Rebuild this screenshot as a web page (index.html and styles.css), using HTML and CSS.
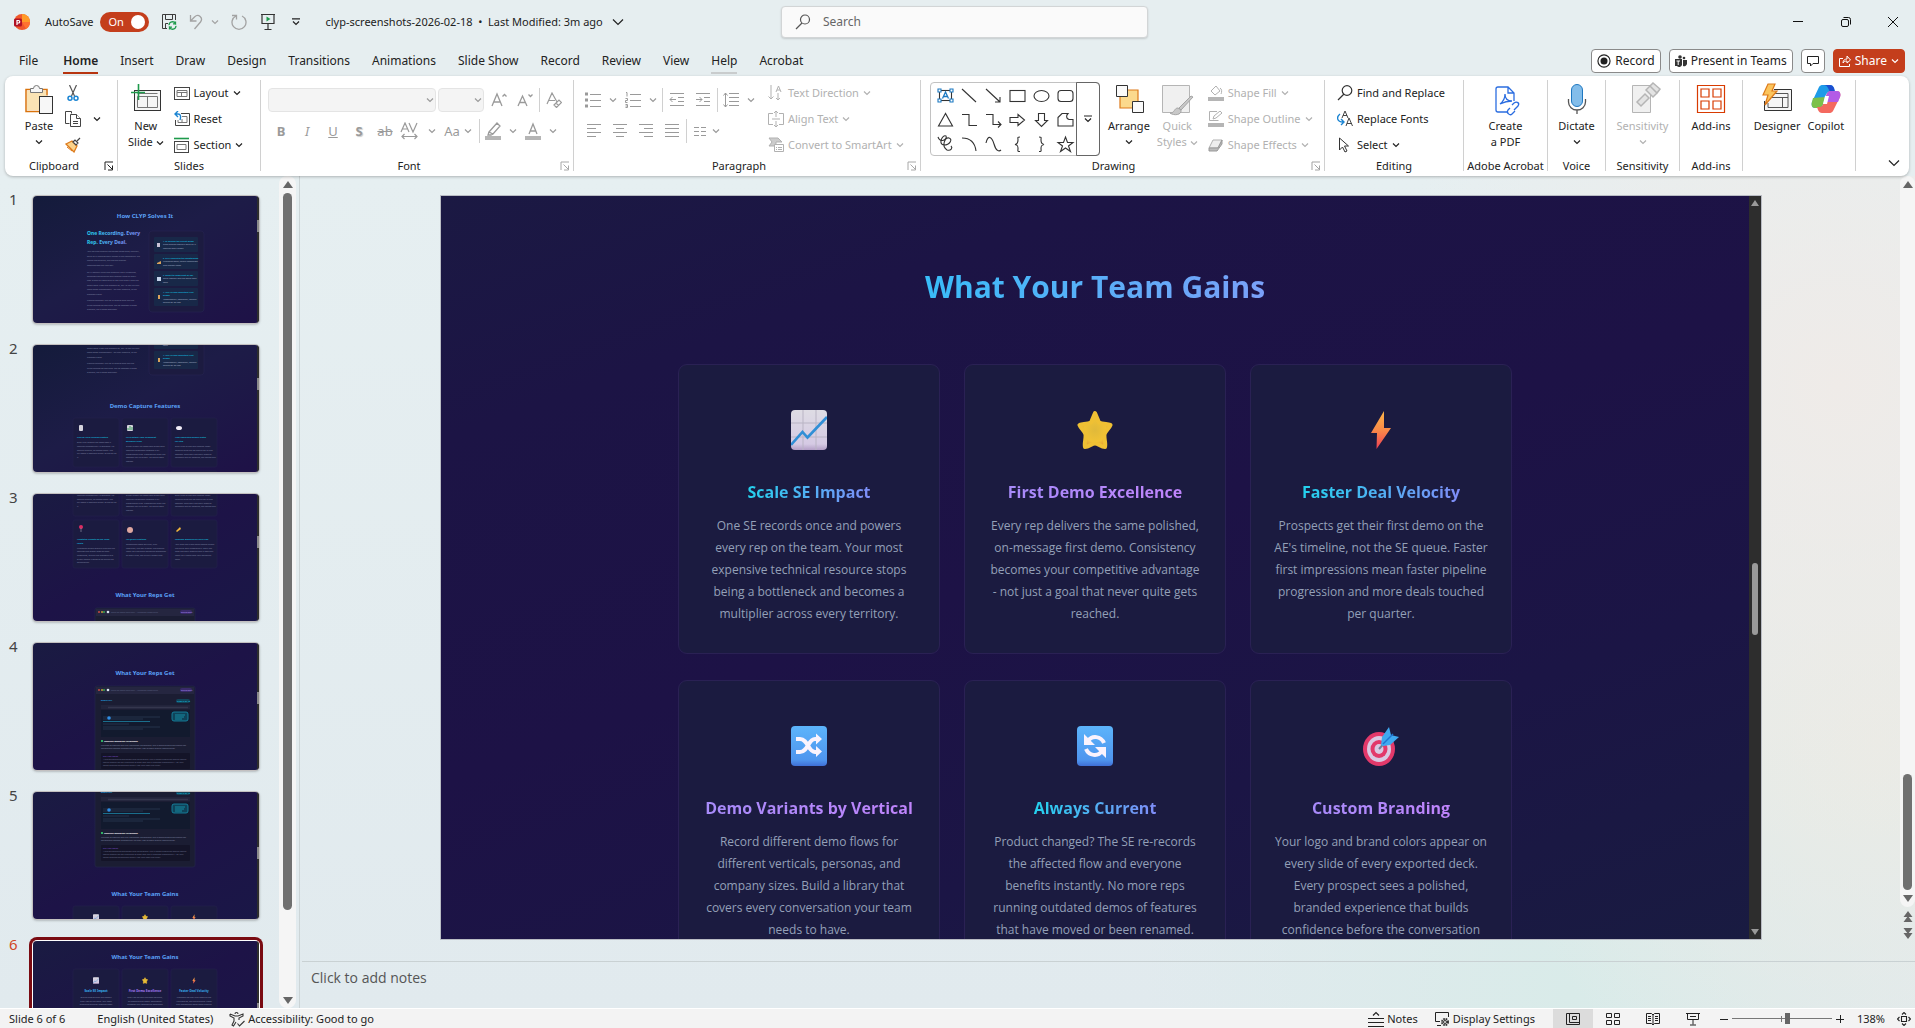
FILE: index.html
```html
<!DOCTYPE html>
<html lang="en">

<head>
    <meta charset="UTF-8">
    <meta name="viewport" content="width=device-width, initial-scale=1.0">
    <title>clyp-screenshots-2026-02-18 - PowerPoint</title>
    <link rel="stylesheet" href="styles.css">
</head>

<body>

    <!-- shared drawings -->
    <svg class="defs" width="0" height="0" aria-hidden="true">
        <defs>
            <linearGradient id="g-sub" x1="0" x2="1"><stop offset="0" stop-color="#22d3ee"/><stop offset="1" stop-color="#818cf8"/></linearGradient>
            <linearGradient id="g-bg1" x1="0" y1="0" x2="1" y2="1"><stop offset="0" stop-color="#141b3b"/><stop offset=".45" stop-color="#1d1c47"/><stop offset="1" stop-color="#1e1147"/></linearGradient>
            <linearGradient id="g-bg2" x1="0" y1="0" x2="1" y2="1"><stop offset="0" stop-color="#1a1b42"/><stop offset=".5" stop-color="#1d1347"/><stop offset="1" stop-color="#1a1747"/></linearGradient>
            <linearGradient id="g-bolt" x1="0" y1="0" x2="0" y2="1"><stop offset="0" stop-color="#fdb548"/><stop offset=".5" stop-color="#f98a48"/><stop offset="1" stop-color="#ee3f55"/></linearGradient>
            <linearGradient id="g-tile" x1="0" y1="0" x2="0" y2="1"><stop offset="0" stop-color="#5cb4fb"/><stop offset=".85" stop-color="#4f95ee"/><stop offset="1" stop-color="#3f6fd6"/></linearGradient>
            <linearGradient id="g-chart" x1="0" y1="0" x2="0" y2="1"><stop offset="0" stop-color="#dedce4"/><stop offset=".85" stop-color="#d5cae4"/><stop offset="1" stop-color="#b39fc6"/></linearGradient>
            <radialGradient id="g-star"><stop offset="0" stop-color="#e0b93a"/><stop offset=".7" stop-color="#f0c235"/><stop offset="1" stop-color="#e4a335"/></radialGradient>

            <symbol id="chev" viewBox="0 0 8 8"><path d="M1 2.500l3 3 3-3" fill="none" stroke="currentColor" stroke-width="1.200"/></symbol>
            <symbol id="bigchev" viewBox="0 0 12 12"><path d="M1 3.500l5 5 5-5" fill="none" stroke="currentColor" stroke-width="1.200"/></symbol>
            <symbol id="launch" viewBox="0 0 10 10"><path d="M1 9V1h8M3.500 3.500l5 5M8.500 4.500v4.500H4" fill="none" stroke="currentColor"/></symbol>

            <symbol id="e-chart" viewBox="0 0 36 40">
                <rect width="36" height="40" rx="4" fill="url(#g-chart)"/>
                <path d="M12 0v40M25 0v40M0 13h36M0 27h36" stroke="#b9b4c4"/>
                <path d="M0 35l11.500-13 5 5.500L36 7" fill="none" stroke="#318fd6" stroke-width="2.600"/>
            </symbol>
            <symbol id="e-star" viewBox="0 0 36 40">
                <path d="M18 3L22 12.500C26 14 30 14 33.500 15C32 19 28 21 27.500 24.500C27 29 29 33 28 37C24 37 21 33.500 18 33.500C15 33.500 12 37 8 37C7 33 9 29 8.500 24.500C8 21 4 19 2.500 15C6 14 10 14 14 12.500Z" fill="url(#g-star)" stroke="#efc034" stroke-width="4" stroke-linejoin="round"/>
            </symbol>
            <symbol id="e-bolt" viewBox="0 0 36 40"><path d="M21 1L8 23h6l-.5 16L28 18h-7z" fill="url(#g-bolt)"/></symbol>
            <symbol id="e-shuffle" viewBox="0 0 36 40">
                <rect width="36" height="40" rx="4" fill="url(#g-tile)"/>
                <path d="M5 13h4c8 0 8 13 15 13h2M5 26h4c8 0 8-13 15-13h2" fill="none" stroke="#fbf3fd" stroke-width="4"/>
                <path d="M25 7.500l6 5.500-6 5.500zM25 20l6 5.500-6 5.500z" fill="#fbf3fd"/>
            </symbol>
            <symbol id="e-sync" viewBox="0 0 36 40">
                <rect width="36" height="40" rx="4" fill="url(#g-tile)"/>
                <path d="M11 15c4-6 13-5 16 2M25 25c-4 6-13 5-16-2" fill="none" stroke="#fbf3fd" stroke-width="4"/>
                <path d="M7 8v11h11zM29 32V21H18z" fill="#fbf3fd"/>
            </symbol>
            <symbol id="e-target" viewBox="0 0 36 40">
                <ellipse cx="16" cy="23" rx="16" ry="17" fill="#e2396a"/>
                <ellipse cx="16" cy="23" rx="12" ry="13" fill="#d9c9e2"/>
                <ellipse cx="16" cy="23" rx="8.500" ry="9" fill="#e2396a"/>
                <ellipse cx="16" cy="23" rx="4.500" ry="5" fill="#d9c9e2"/>
                <path d="M16 23L25 13" stroke="#6f7f99" stroke-width="2"/>
                <path d="M18 19l1-8 7-10 2 8 8 2-9 8-7 1z" fill="#3fa9f0"/>
                <path d="M20 18L30 8" stroke="#1e74d0" stroke-width="1.500"/>
            </symbol>

            <!-- thumbnail sections -->
            <g id="sec-solve" class="tiny">
                <text x="112" y="22" class="t-head" fill="#5aa0f6">How CLYP Solves It</text>
                <g class="t-sub" fill="url(#g-sub)"><text x="54" y="39">One Recording. Every</text><text x="54" y="48">Rep. Every Deal.</text></g>
                <g fill="#8088a6">
                    <text x="54" y="56">Your SE clicks through the perfect demo once, naturally,</text>
                    <text x="54" y="61">while CLYP captures every screen in the background. We</text>
                    <text x="54" y="65">handle the scripting, and the end product</text>
                    <text x="54" y="70">demonstrated the right way.</text>
                    <text x="54" y="77">CLYP instantly turns that recording into a numbered,</text>
                    <text x="54" y="81">annotated walkthrough with speaker notes on every</text>
                    <text x="54" y="85">step. Export to PowerPoint or PDF and share it with the</text>
                    <text x="54" y="90">whole team. From that moment on, any AE can run that</text>
                    <text x="54" y="94">same demo independently - on their schedule, at the</text>
                    <text x="54" y="99">prospect's pace.</text>
                    <text x="54" y="105">Product updated? Your SE re-records once and the</text>
                    <text x="54" y="110">guide updates for everyone. The SE becomes a demo</text>
                    <text x="54" y="114">architect, not a demo attendant.</text>
                </g>
                <rect x="116" y="35" width="55" height="81" rx="3" fill="#1c1b40" stroke="#252350" stroke-width=".7"/>
                <g fill="#182848"><rect x="121" y="41" width="44" height="15" rx="1"/><rect x="121" y="58" width="44" height="15" rx="1"/><rect x="121" y="75" width="44" height="15" rx="1"/><rect x="121" y="92" width="44" height="18" rx="1"/></g>
                <g fill="#d8a25c"><rect x="124" y="47" width="3" height="4" fill="#c9c2d6"/><path d="M124 67l4-2v3h-4z"/><rect x="124" y="81" width="4" height="4" fill="#c5d3ea"/><rect x="125" y="99" width="2" height="4"/></g>
                <g fill="#14b4d8" font-weight="700">
                    <text x="130" y="46">1. SE Records the Perfect Demo</text>
                    <text x="130" y="63">2. CLYP Generates the Walkthrough</text>
                    <text x="130" y="80">3. Export to PowerPoint or PDF</text>
                    <text x="130" y="97">4. Any AE Runs Consistent First</text>
                    <text x="130" y="100">Demos</text>
                </g>
                <g fill="#a9b4c9">
                    <text x="130" y="49">Clicks through naturally while CLYP</text><text x="130" y="53">captures every screen</text>
                    <text x="130" y="66">Numbered steps, callout annotations</text><text x="130" y="70">auto speaker notes</text>
                    <text x="130" y="83">Share instantly with the entire sales</text><text x="130" y="87">team</text>
                    <text x="130" y="104">Independently, confidently, without</text><text x="130" y="107">waiting for SE time</text>
                </g>
            </g>
            <g id="sec-features" class="tiny">
                <text x="112" y="63" class="t-head" fill="#5aa0f6">Demo Capture Features</text>
                <g fill="#1b1b40" stroke="#221f4c" stroke-width=".7">
                    <rect x="40" y="73" width="46" height="49" rx="2"/><rect x="89" y="73" width="46" height="49" rx="2"/><rect x="138" y="73" width="46" height="49" rx="2"/>
                    <rect x="40" y="126" width="46" height="48" rx="2"/><rect x="89" y="126" width="46" height="48" rx="2"/><rect x="138" y="126" width="46" height="48" rx="2"/>
                </g>
                <rect x="46" y="80" width="4" height="6" rx="1" fill="#d5d3dc"/>
                <rect x="94" y="80" width="6" height="6" rx="1" fill="#d5d3dc"/><path d="M95 85v-2M97 85v-4M99 85v-3" stroke="#3a9f5e"/>
                <ellipse cx="146" cy="83" rx="3" ry="2" fill="#f1edf7"/>
                <circle cx="48" cy="133" r="2" fill="#dd2c62"/><path d="M48 134v4" stroke="#8d8da0" stroke-width=".7"/>
                <circle cx="97" cy="136" r="3" fill="#dfa7a0"/><path d="M143 137l4-4 1 2-4 3z" fill="#f1b63c"/>
                <g fill="#14b4d8" font-weight="700">
                    <text x="44" y="93">Click-by-Click Precision Capture</text>
                    <text x="93" y="93">PPTX Output: Each Screenshot</text><text x="93" y="97">Becomes a Slide</text>
                    <text x="142" y="93">Auto-Generated Speaker Notes</text><text x="142" y="97">Per Step</text>
                    <text x="44" y="146">Annotated Callouts on Key Value</text><text x="44" y="150">Points</text>
                    <text x="93" y="146">HD Quality Captures</text>
                    <text x="142" y="146">Company Branding on Every Slide</text>
                </g>
                <g fill="#8088a6">
                    <text x="44" y="98">Every click through the demo flow is</text><text x="44" y="102">captured automatically in sequence. No</text><text x="44" y="106">manual tagging, no missed steps - the</text><text x="44" y="109">full demo is recorded exactly as the SE ran</text><text x="44" y="113">it.</text>
                    <text x="93" y="102">Export directly to PowerPoint where each</text><text x="93" y="106">captured screenshot becomes a full</text><text x="93" y="110">presentation slide. Presentation-ready the</text><text x="93" y="113">moment you hit export - no design work</text><text x="93" y="117">needed.</text>
                    <text x="142" y="102">Every slide arrives with speaker notes</text><text x="142" y="106">covering what the rep should say at that</text><text x="142" y="110">moment. Reps walk into every meeting</text><text x="142" y="113">confident and on-message, not improvising.</text>
                    <text x="44" y="155">Numbered callout overlays highlight the</text><text x="44" y="158">features that matter most on each</text><text x="44" y="162">screenshot, guiding the prospect's eye</text><text x="44" y="166">exactly where it needs to go during the</text><text x="44" y="169">walkthrough.</text>
                    <text x="93" y="151">Screenshots come out crisp, high-</text><text x="93" y="155">resolution, and well framed. The product</text><text x="93" y="158">looks like a polished marketing screenshot</text><text x="93" y="162">on every slide, not a blurry screen grab.</text>
                    <text x="142" y="151">Your logo and brand colors appear across</text><text x="142" y="155">the entire deck automatically. Every rep</text><text x="142" y="158">goes into every meeting with a deck that</text><text x="142" y="162">looks like it came from your marketing</text><text x="142" y="166">team.</text>
                </g>
            </g>
            <g id="sec-reps" class="tiny">
                <text x="112" y="32" class="t-head" fill="#5aa0f6">What Your Reps Get</text>
                <rect x="62" y="43" width="100" height="89" rx="2" fill="#1b1d33" stroke="#22264a" stroke-width=".7"/>
                <path d="M63 44h98v7H63z" fill="#252640"/>
                <g><circle cx="66" cy="47" r="1" fill="#c94a45"/><circle cx="69" cy="47" r="1" fill="#c4973a"/><circle cx="71" cy="47" r="1" fill="#35a551"/><circle cx="75" cy="47" r="1.300" fill="#d9e3f0"/></g>
                <text x="78" y="48" fill="#5c6384">acme-q2-demo-deck.pptx - Annotated PowerPoint</text>
                <rect x="147" y="45" width="12" height="4" rx="2" fill="#3a2a6b"/><text x="148" y="48" fill="#a98bf0">DEMO DECK</text>
                <g font-weight="700"><text x="68" y="58" fill="#22a6e0">DEMO STEP</text><rect x="143" y="56" width="14" height="4" rx="2" fill="#12455a"/><text x="144" y="59" fill="#14b4d8">SLIDE 3 OF 12</text></g>
                <rect x="68" y="62" width="89" height="4" fill="#22243b"/><path d="M75 64.500h80" stroke="#34364d" stroke-width="1.500"/>
                <rect x="68" y="67" width="89" height="27" fill="#121a2e"/>
                <path d="M70 74h57M70 76h40M70 81h26M70 84h57M70 86h40" stroke="#25334a" stroke-width="1.200"/>
                <path d="M70 78.500h47" stroke="#1a6e8c"/>
                <circle cx="76" cy="75" r="1.800" fill="#2f8fe8"/>
                <rect x="139" y="69" width="16" height="9" rx="2" fill="#0f4359" stroke="#1691ad" stroke-width=".8"/>
                <path d="M142 72h10M142 74h9M142 76h7" stroke="#189fb8" stroke-width=".8"/>
                <rect x="68" y="97" width="2" height="2" fill="#2fae60"/>
                <text x="71" y="99" fill="#fff" font-weight="700">Configure Workspace Permissions</text>
                <g fill="#8088a6"><text x="68" y="103">Navigate to Settings and click Workspace Permissions. This is where enterprise admins can</text><text x="68" y="106">permissions cascade automatically to every user without manual configuration.</text></g>
                <rect x="68" y="110" width="89" height="16" rx="1" fill="#141428"/>
                <text x="70" y="114" fill="#7a4fc9">SPEAKER NOTES</text>
                <g fill="#6c7390"><text x="70" y="117">"Here we configure workspace-level permissions. This is where enterprise admins control</text><text x="70" y="120">setting means you set rules once at team level and it cascades automatically. Ask your</text><text x="70" y="123">teams manage permissions today? How long does that take?"</text></g>
            </g>
            <g id="sec-gains" class="tiny">
                <text x="112" y="18" class="t-head" fill="#5aa0f6">What Your Team Gains</text>
                <g fill="#1b1b40" stroke="#221f4c" stroke-width=".7"><rect x="40" y="28" width="46" height="50" rx="2"/><rect x="89" y="28" width="46" height="50" rx="2"/><rect x="138" y="28" width="46" height="50" rx="2"/></g>
                <use href="#e-chart" x="60" y="36" width="6" height="7"/><use href="#e-star" x="109" y="36" width="6" height="7"/><use href="#e-bolt" x="158" y="36" width="6" height="7"/>
                <g class="t-mid">
                    <g class="t-card"><text x="63" y="51" fill="#38b0ee">Scale SE Impact</text><text x="112" y="51" fill="#a77cf2">First Demo Excellence</text><text x="161" y="51" fill="#38b0ee">Faster Deal Velocity</text></g>
                    <g fill="#8088a6">
                        <text x="63" y="57">One SE records once and powers</text><text x="63" y="61">every rep on the team. Your most</text><text x="63" y="64">expensive technical resource stops</text><text x="63" y="68">being a bottleneck</text>
                        <text x="112" y="57">Every rep delivers the same polished,</text><text x="112" y="61">on-message first demo. Consistency</text><text x="112" y="64">becomes your competitive advantage</text><text x="112" y="68">- not just a goal</text>
                        <text x="161" y="57">Prospects get their first demo on the</text><text x="161" y="61">AE's timeline, not the SE queue. Faster</text><text x="161" y="64">first impressions mean faster pipeline</text><text x="161" y="68">progression</text>
                    </g>
                </g>
            </g>
        </defs>
    </svg>

    <div class="app">

        <header class="titlebar">
            <div class="quick">
                <svg class="i16 logo" viewBox="0 0 16 16"><circle cx="8" cy="8" r="8" fill="#f0582b"/><path d="M8 0a8 8 0 0 1 8 8H8z" fill="#ff9a28"/><path d="M8 8h8a8 8 0 0 1-4 7z" fill="#ff7230"/><rect y="4.500" width="8" height="8" rx="1.500" fill="#b01224"/><path d="M3 11V6.500h1.500a1.200 1.200 0 0 1 0 2.500H3" fill="none" stroke="#fff" stroke-width="1.200"/></svg>
                <span class="autosave">AutoSave</span>
                <button class="toggle" type="button" aria-pressed="true" aria-label="AutoSave">On<i></i></button>
                <button class="tool save" type="button" aria-label="Save"><svg class="i16" viewBox="0 0 16 16"><g fill="none" stroke="#3b3b3b"><path d="M6 14.500H1.500v-14h13V6M4.500.5v5h7v-5M4.500 14.500v-5H7"/><path stroke="#1e9a4c" stroke-width="1.300" d="M8 11a3.500 3.500 0 0 1 6.500-1.500V7.500M14.500 9.800h-2.500M15 12a3.500 3.500 0 0 1-6.500 1.500v2M8.500 13.200H11"/></g></svg></button>
                <button class="tool dim" type="button" aria-label="Undo"><svg class="i16" viewBox="0 0 16 16"><path d="M1.500 1v6h6M1.500 7l4-4c4-4 9 1 6 5l-6 7" fill="none" stroke="currentColor" stroke-width="1.300"/></svg><svg class="chev"><use href="#chev"/></svg></button>
                <button class="tool dim" type="button" aria-label="Redo"><svg class="i16" viewBox="0 0 16 16"><path d="M1 1.500h4.500v4M5 2a7 7 0 1 0 6 0" fill="none" stroke="currentColor" stroke-width="1.300"/></svg></button>
                <button class="tool show" type="button" aria-label="Start slide show"><svg class="i16" viewBox="0 0 16 16"><path d="M1 .5h14M2 .5v9h12v-9M8 9.500v6M4.500 15.500h7" fill="none" stroke="#333" stroke-width="1.200"/><path d="M6.500 2.500v5l4-2.500z" fill="#1e9a4c"/></svg></button>
                <button class="tool more" type="button" aria-label="Customize toolbar"><svg class="chev" viewBox="0 0 8 8"><path d="M0 .8h8M1 3.500L4 6.500l3-3" fill="none" stroke="#222" stroke-width="1.200"/></svg></button>
                <button class="docname" type="button">clyp-screenshots-2026-02-18 &nbsp;•&nbsp; Last Modified: 3m ago <svg class="bigchev"><use href="#bigchev"/></svg></button>
            </div>
            <label class="search">
                <svg class="i16" viewBox="0 0 16 16"><circle cx="10" cy="5.500" r="4.500" fill="none" stroke="#555" stroke-width="1.200"/><path d="M7 9l-6 6" stroke="#555" stroke-width="1.200"/></svg>
                <input type="search" placeholder="Search" aria-label="Search">
            </label>
            <div class="winctl">
                <button type="button" aria-label="Minimize"><svg class="i12" viewBox="0 0 12 12"><path d="M1 5.500h10" stroke="#111"/></svg></button>
                <button type="button" aria-label="Restore"><svg class="i12" viewBox="0 0 12 12"><g fill="none" stroke="#111"><rect x="1.500" y="3.500" width="7" height="7" rx="1.500"/><path d="M3.500 1.500h5a2 2 0 0 1 2 2v5"/></g></svg></button>
                <button type="button" aria-label="Close"><svg class="i12" viewBox="0 0 12 12"><path d="M1 1l10 10M11 1L1 11" stroke="#111"/></svg></button>
            </div>
        </header>

        <div class="tabrow">
            <nav class="tabs">
                <a href="#" class="file">File</a>
                <a href="#" class="active">Home</a>
                <a href="#">Insert</a>
                <a href="#">Draw</a>
                <a href="#">Design</a>
                <a href="#">Transitions</a>
                <a href="#">Animations</a>
                <a href="#">Slide Show</a>
                <a href="#">Record</a>
                <a href="#">Review</a>
                <a href="#">View</a>
                <a href="#" class="hover">Help</a>
                <a href="#">Acrobat</a>
            </nav>
            <div class="actions">
                <button type="button"><svg class="i14" viewBox="0 0 12 12"><circle cx="6" cy="6" r="5.200" fill="none" stroke="#222"/><circle cx="6" cy="6" r="3" fill="#222"/></svg>Record</button>
                <button type="button"><svg class="i12" viewBox="0 0 12 12"><g fill="#333"><circle cx="5" cy="2" r="1.800"/><circle cx="9" cy="3" r="1.300"/><path d="M0 4h7v6a3 3 0 0 1-5 1H0zM8 5h4v4a3 3 0 0 1-4 2z"/></g><path d="M1.500 6h3.500M3.200 6v4" stroke="#fff"/></svg>Present in Teams</button>
                <button type="button" class="comment" aria-label="Comments"><svg class="i12" viewBox="0 0 12 12"><path d="M.5 1.500h11v7H6L3.500 11V8.500h-3z" fill="none" stroke="#222"/></svg></button>
                <button type="button" class="share"><svg class="i12" viewBox="0 0 12 12"><path d="M4 3.500H.500v8h10V9M4 8c0-3 2-4 4-4V1l3.500 4L8 8V6C6 6 5 6.500 4 8z" fill="none" stroke="#fff"/></svg>Share<svg class="chev"><use href="#chev"/></svg></button>
            </div>
        </div>

        <section class="ribbon">
            <div class="group clipboard">
                <div class="body">
                    <button class="big" type="button"><svg class="i30" viewBox="0 0 30 30"><path d="M6.500 5.500H2v22h14M19 5.500h4v6" fill="none" stroke="#d9730d" stroke-width="1.500"/><path d="M3 7h19v5h-6v14H3z" fill="#fae3b4"/><path d="M6.500 8.500V4.500h3a3 3 0 0 1 6 0h3v4z" fill="#f6f6f6" stroke="#777"/><rect x="15.500" y="12.500" width="13" height="17" fill="#f7f7f7" stroke="#333"/></svg><span>Paste</span><svg class="chev"><use href="#chev"/></svg></button>
                    <div class="stack">
                        <button type="button" aria-label="Cut"><svg class="i16" viewBox="0 0 16 16"><path d="M4.500 0l5 11M11.500 0l-5 11" stroke="#555" stroke-width="1.200"/><g fill="none" stroke="#1a84d2" stroke-width="1.500"><circle cx="5" cy="13.200" r="2"/><circle cx="11" cy="13.200" r="2"/></g></svg></button>
                        <button type="button" aria-label="Copy"><svg class="i16" viewBox="0 0 16 16"><g fill="#fff" stroke="#444"><path d="M.5.5h6v2M4.500 12.500h-4V.5"/><path d="M5.500 3.500h6l4 4v8h-10z"/><path d="M11.500 3.500v4h4M8 10.500h5M8 12.500h5"/></g></svg><svg class="chev"><use href="#chev"/></svg></button>
                        <button type="button" aria-label="Format Painter"><svg class="i16" viewBox="0 0 16 16"><path d="M1 7l6-3 5 5-3 6z" fill="#fbd28a" stroke="#dd7a1a" stroke-width="1.300"/><path d="M2 10l5 4" stroke="#dd7a1a"/><path d="M8 5l2-2 3 3-2 2zM12 4l3-3" fill="#fff" stroke="#444" stroke-width="1.200"/></svg></button>
                    </div>
                </div>
                <div class="label"><span>Clipboard</span><svg class="launch"><use href="#launch"/></svg></div>
            </div>

            <div class="group slides">
                <div class="body">
                    <button class="big" type="button"><svg class="i30" viewBox="0 0 30 30"><rect x="3.500" y="6.500" width="26" height="20" fill="#f5f5f5" stroke="#333"/><path d="M6.500 12.500h20v11h-20zM16.500 12.500v11M6.500 9.500h20" fill="none" stroke="#777"/><path d="M0 8.500h14M7.500 0v16" stroke="#1e9a4c" stroke-width="1.600"/></svg><span>New<br>Slide <svg class="chev"><use href="#chev"/></svg></span></button>
                    <div class="stack">
                        <button type="button"><svg class="i16" viewBox="0 0 16 16"><g fill="none" stroke="#444"><rect x=".5" y="2.500" width="15" height="12"/><path stroke="#777" d="M3 5.500h10v6H3zM3 7.500h10M7.500 7.500v4"/></g></svg>Layout <svg class="chev"><use href="#chev"/></svg></button>
                        <button type="button"><svg class="i16" viewBox="0 0 16 16"><g fill="none" stroke="#444"><path d="M7 2.500h8.500v12H1.500V9"/><path stroke="#777" d="M8 5.500h5v6H4V9M8 8v3"/><path stroke="#1a84d2" stroke-width="1.400" d="M4 0L1 3l3 3M1 3h3c3 0 3 3 2 6"/></g></svg>Reset</button>
                        <button type="button"><svg class="i16" viewBox="0 0 16 16"><g fill="none" stroke="#444"><path stroke="#1e9a4c" stroke-width="1.600" d="M0 1.500h15"/><rect x=".5" y="4.500" width="14" height="11"/><path stroke="#777" d="M3 7.500h9v5H3z"/></g></svg>Section <svg class="chev"><use href="#chev"/></svg></button>
                    </div>
                </div>
                <div class="label"><span>Slides</span></div>
            </div>

            <div class="group font off">
                <div class="body rows">
                    <div class="row">
                        <span class="combo wide"><select disabled aria-label="Font"><option></option></select><svg class="chev"><use href="#chev"/></svg></span>
                        <span class="combo narrow"><select disabled aria-label="Font size"><option></option></select><svg class="chev"><use href="#chev"/></svg></span>
                        <button type="button" disabled aria-label="Increase font size"><svg class="i16" viewBox="0 0 16 16"><path d="M1 14L6 2l5 12M3 10h6M11.500 4.500l2-2 2 2" fill="none" stroke="currentColor" stroke-width="1.300"/></svg></button>
                        <button type="button" disabled aria-label="Decrease font size"><svg class="i16" viewBox="0 0 16 16"><path d="M1 14L5.500 4 10 14M3 10.500h5M11.500 2.500l2 2 2-2" fill="none" stroke="currentColor" stroke-width="1.300"/></svg></button>
                        <i class="sep"></i>
                        <button type="button" disabled aria-label="Clear formatting"><svg class="i16" viewBox="0 0 16 16"><path d="M1 12L6 1l5 9M3 8.500h6M8 13l5-5 2.500 2.500-5 5zM10 11l2.500 2.500" fill="none" stroke="currentColor" stroke-width="1.200"/></svg></button>
                    </div>
                    <div class="row">
                        <button type="button" disabled><b>B</b></button>
                        <button type="button" disabled><em>I</em></button>
                        <button type="button" disabled><u>U</u></button>
                        <button type="button" disabled class="shadow"><b>S</b></button>
                        <button type="button" disabled><s>ab</s></button>
                        <button type="button" disabled class="split" aria-label="Character spacing"><svg class="i24" viewBox="0 0 20 18"><path d="M1 10L5 1l4 9M2.500 7h5M9 1l4 9 4-9M2 14.500h15M4.500 12L2 14.500 4.500 17M14.500 12l2.500 2.500-2.500 2.500" fill="none" stroke="currentColor" stroke-width="1.200"/></svg><svg class="chev"><use href="#chev"/></svg></button>
                        <button type="button" disabled class="split case">Aa<svg class="chev"><use href="#chev"/></svg></button>
                        <i class="sep"></i>
                        <button type="button" disabled class="split" aria-label="Highlight"><svg class="i18" viewBox="0 0 16 18"><path d="M4 10l8-9 3 3-7 8zM4 10l-1 3h3l2-1" fill="none" stroke="currentColor" stroke-width="1.300"/><path d="M0 14h16v4H0z" fill="#b5b5b5"/></svg><svg class="chev"><use href="#chev"/></svg></button>
                        <button type="button" disabled class="split" aria-label="Font color"><svg class="i18" viewBox="0 0 16 18"><path d="M4 12L8 2l4 10M5 9h6" fill="none" stroke="currentColor" stroke-width="1.300"/><path d="M0 14h16v4H0z" fill="#b5b5b5"/></svg><svg class="chev"><use href="#chev"/></svg></button>
                    </div>
                </div>
                <div class="label"><span>Font</span><svg class="launch"><use href="#launch"/></svg></div>
            </div>

            <div class="group paragraph off">
                <div class="body">
                    <div class="rows">
                        <div class="row">
                            <button type="button" disabled class="split" aria-label="Bullets"><svg class="i16" viewBox="0 0 16 16"><path d="M0 2h3M0 8h3M0 14h3" stroke="currentColor" stroke-width="3"/><path d="M5 2.500h11M5 8.500h11M5 14.500h11" stroke="currentColor"/></svg><svg class="chev"><use href="#chev"/></svg></button>
                            <button type="button" disabled class="split" aria-label="Numbering"><svg class="i16" viewBox="0 0 16 16"><path d="M5 2.500h11M5 8.500h11M5 14.500h11M1 .500h1v4M.500 6.500h2v2h-2v2h2M.500 12.500h2v3h-2M.500 14h2" fill="none" stroke="currentColor"/></svg><svg class="chev"><use href="#chev"/></svg></button>
                            <i class="sep"></i>
                            <button type="button" disabled aria-label="Decrease indent"><svg class="i16" viewBox="0 0 16 16"><path d="M1 1.500h14M9 5.500h6M9 9.500h6M1 13.500h14M1 7.500h6M3.500 5L1 7.500 3.500 10" fill="none" stroke="currentColor"/></svg></button>
                            <button type="button" disabled aria-label="Increase indent"><svg class="i16" viewBox="0 0 16 16"><path d="M1 1.500h14M9 5.500h6M9 9.500h6M1 13.500h14M1 7.500h6M4.500 5L7 7.500 4.500 10" fill="none" stroke="currentColor"/></svg></button>
                            <i class="sep"></i>
                            <button type="button" disabled class="split" aria-label="Line spacing"><svg class="i16" viewBox="0 0 16 16"><path d="M6 1.500h10M6 5.500h10M6 9.500h10M6 13.500h10M2.500 1v14M.500 3.500l2-2.500 2 2.500M.500 12.500l2 2.500 2-2.500" fill="none" stroke="currentColor"/></svg><svg class="chev"><use href="#chev"/></svg></button>
                        </div>
                        <div class="row">
                            <button type="button" disabled aria-label="Align left"><svg class="i16" viewBox="0 0 16 16"><path d="M1 1.500h14M1 5.500h9M1 9.500h14M1 13.500h9" stroke="currentColor"/></svg></button>
                            <button type="button" disabled aria-label="Center"><svg class="i16" viewBox="0 0 16 16"><path d="M1 1.500h14M4 5.500h8M1 9.500h14M4 13.500h8" stroke="currentColor"/></svg></button>
                            <button type="button" disabled aria-label="Align right"><svg class="i16" viewBox="0 0 16 16"><path d="M1 1.500h14M6 5.500h9M1 9.500h14M6 13.500h9" stroke="currentColor"/></svg></button>
                            <button type="button" disabled aria-label="Justify"><svg class="i16" viewBox="0 0 16 16"><path d="M1 1.500h14M1 5.500h14M1 9.500h14M1 13.500h14" stroke="currentColor"/></svg></button>
                            <i class="sep"></i>
                            <button type="button" disabled class="split cols" aria-label="Columns"><svg class="i16" viewBox="0 0 16 16"><path d="M2 4.500h5M9 4.500h5M2 8.500h5M9 8.500h5M2 12.500h5M9 12.500h5" stroke="currentColor"/></svg><svg class="chev"><use href="#chev"/></svg></button>
                        </div>
                    </div>
                    <div class="stack">
                        <button type="button" disabled><svg class="i16" viewBox="0 0 16 16"><path d="M3 0v14M.500 11.500L3 14l2.500-2.500M10 8v7M8 13l2 2 2-2M8 7l2.500-6L13 7M9 5h3" fill="none" stroke="currentColor"/></svg>Text Direction <svg class="chev"><use href="#chev"/></svg></button>
                        <button type="button" disabled><svg class="i16" viewBox="0 0 16 16"><path d="M5 2.500H.500v11H5M11 2.500h4.500v11H11M4 8h8M8 0v6M6 2l2-2 2 2M8 10v6M6 14l2 2 2-2" fill="none" stroke="currentColor"/></svg>Align Text <svg class="chev"><use href="#chev"/></svg></button>
                        <button type="button" disabled><svg class="i16" viewBox="0 0 16 16"><path d="M1 1h9l4 4H8v4H1l3-4z" fill="#ccc" stroke="currentColor"/><path d="M6.500 7.500h9v7h-9zM8 10.500h1M10 10.500h4M8 12.500h1M10 12.500h4" fill="#fff" stroke="currentColor"/></svg>Convert to SmartArt <svg class="chev"><use href="#chev"/></svg></button>
                    </div>
                </div>
                <div class="label"><span>Paragraph</span><svg class="launch"><use href="#launch"/></svg></div>
            </div>

            <div class="group drawing">
                <div class="body">
                    <div class="gallery">
                        <svg class="shapes" viewBox="0 0 144 72" fill="none" stroke="#333" stroke-width="1.100">
                            <g stroke="#1a78c2"><rect x="7.500" y="7.500" width="12" height="10" stroke="#333"/><path d="M10.500 15.500l3-6.500 3 6.500M11.500 13.500h4" stroke-width="1.300"/><path d="M6 6h3v3H6zM18 6h3v3h-3zM6 16h3v3H6zM18 16h3v3h-3z" fill="#fff"/></g>
                            <path d="M30 6l14 13"/>
                            <path d="M54 6l14 13M68 14v5h-5"/>
                            <rect x="78" y="7.500" width="15" height="11"/>
                            <ellipse cx="109.500" cy="13" rx="7.500" ry="5.500"/>
                            <rect x="126" y="7.500" width="15" height="11" rx="3"/>
                            <path d="M13.500 30.500l-7 12.500h14z"/>
                            <path d="M30 31.500h7v11h8"/>
                            <path d="M54 31.500h7v10h8M66 38.500l3 3-3 3"/>
                            <path d="M78 34.500h8v-3l6.500 5.500-6.500 5.500v-3h-8z"/>
                            <path d="M106.500 30.500v7h-3l6 6 6-6h-3v-7z"/>
                            <path d="M126 34.500l4-4h6c-2 2-2 5 1 6h4v6.500h-15z"/>
                            <path d="M6 54c2 7 10 2 8-1-4-2-8 9-2 9s9-6 5-7-8 8-2 12c4 1 6-2 4-4"/>
                            <path d="M30 55c9 0 13 5 14 13"/>
                            <path d="M54 60c2-9 6-6 8 1s5 8 7 6"/>
                            <path d="M88 54c-3 0-2 1-2 3s0 4-3 4.500c3 .5 3 2 3 4s-1 3 2 3"/>
                            <path d="M107 54c3 0 2 1 2 3s0 4 3 4.500c-3 .5-3 2-3 4s1 3-2 3"/>
                            <path d="M133.500 54l2 5.500h5.500l-4.500 3.500 2 5.500-5-3.500-5 3.500 2-5.500-4.500-3.500h5.500z"/>
                        </svg>
                        <button type="button" aria-label="More shapes"><svg class="chev" viewBox="0 0 8 8"><path d="M0 1h8M1 3.500L4 6.500l3-3" fill="none" stroke="#222" stroke-width="1.200"/></svg></button>
                    </div>
                    <button class="big arrange" type="button"><svg class="i30" viewBox="0 0 30 30"><path d="M6 6h18v18H6z" fill="#fbd98d" stroke="#dd7a1a" stroke-width="1.200"/><path d="M2.500 1.500h11v11h-11zM18.500 17.500h11v11h-11z" fill="#fafafa" stroke="#333"/></svg><span>Arrange</span><svg class="chev"><use href="#chev"/></svg></button>
                    <button class="big quickst" type="button" disabled><svg class="i30" viewBox="0 0 30 30"><path d="M.5 1.500h27v27H.5z" fill="#f0f0f0" stroke="#b5b5b5"/><path d="M29 12L17 24l2 2 12-13zM16 24c-4 0-3 5-8 5 4 3 12 2 11-3z" fill="#c8c8c8" stroke="#a5a5a5"/></svg><span>Quick<br>Styles <svg class="chev"><use href="#chev"/></svg></span></button>
                    <div class="stack off">
                        <button type="button" disabled><svg class="i16" viewBox="0 0 16 16"><path d="M3 6l5-5 4 5-5 4zM12 3c2 1 2 4 1 6" fill="none" stroke="currentColor"/><path d="M0 12h16v4H0z" fill="#b5b5b5"/></svg>Shape Fill <svg class="chev"><use href="#chev"/></svg></button>
                        <button type="button" disabled><svg class="i16" viewBox="0 0 16 16"><path d="M9 .5H1.500v9h9M5 8l1-3 6-5 2 2-6 5z" fill="none" stroke="currentColor"/><path d="M0 12h16v4H0z" fill="#b5b5b5"/></svg>Shape Outline <svg class="chev"><use href="#chev"/></svg></button>
                        <button type="button" disabled><svg class="i16" viewBox="0 0 16 16"><path d="M5 3h9l-4 8H1z" fill="#eee" stroke="currentColor"/><path d="M1 11v3h8l5-7V3l-4 8z" fill="#bbb" stroke="#999"/></svg>Shape Effects <svg class="chev"><use href="#chev"/></svg></button>
                    </div>
                </div>
                <div class="label"><span>Drawing</span><svg class="launch dim"><use href="#launch"/></svg></div>
            </div>

            <div class="group editing">
                <div class="body">
                    <div class="stack">
                        <button type="button"><svg class="i16" viewBox="0 0 16 16"><circle cx="10" cy="5.500" r="4.800" fill="none" stroke="#333" stroke-width="1.200"/><path d="M7 9l-6 6" stroke="#333" stroke-width="1.200"/></svg>Find and Replace</button>
                        <button type="button"><svg class="i16" viewBox="0 0 16 16"><path d="M5 7l3-7 3 7M6 4.500h4M9 15l3-8 3.500 8M10 12.500h5" fill="none" stroke="#444"/><path d="M3 3c-4 3-3 8 3 8M4 8l3 3-3 3" fill="none" stroke="#1a84d2" stroke-width="1.400"/></svg>Replace Fonts</button>
                        <button type="button"><svg class="i16" viewBox="0 0 16 16"><path d="M2.500 1v12l3-3 2.500 5 2-1-2.500-5h4z" fill="#fff" stroke="#333"/></svg>Select <svg class="chev"><use href="#chev"/></svg></button>
                    </div>
                </div>
                <div class="label"><span>Editing</span></div>
            </div>

            <div class="group acrobat">
                <div class="body">
                    <button class="big" type="button"><svg class="i30" viewBox="0 0 30 30"><g fill="none" stroke="#2b6de0" stroke-width="1.300"><path d="M17 28H8a2 2 0 0 1-2-2V5a2 2 0 0 1 2-2h10l6 6v8M18 3v6h6"/><path d="M10 20c4-3 5-8 5-10 0 5 3 7 7 7-5 0-8 1-12 3"/><path d="M20 24l-2 2c-2 3 2 6 4 4l3-3M24 26l4-4c2-3-1-5-4-3l-2 2"/></g></svg><span>Create<br>a PDF</span></button>
                </div>
                <div class="label"><span>Adobe Acrobat</span></div>
            </div>

            <div class="group voice">
                <div class="body">
                    <button class="big" type="button"><svg class="i30" viewBox="0 0 30 30"><rect x="9.500" y=".5" width="11" height="22" rx="5.500" fill="#83bdea" stroke="#1f78c1"/><path d="M6.500 15v3a8.500 8 0 0 0 17 0v-3M15 26v4" fill="none" stroke="#555" stroke-width="1.300"/></svg><span>Dictate</span><svg class="chev"><use href="#chev"/></svg></button>
                </div>
                <div class="label"><span>Voice</span></div>
            </div>

            <div class="group sens">
                <div class="body">
                    <button class="big" type="button" disabled><svg class="i30" viewBox="0 0 30 30"><path d="M4.500 1.500h18v27h-18z" fill="#f0f0f0" stroke="#b5b5b5"/><path d="M9 18l8-8 4 4-8 8zM18 6l4-4 7 7-4 4zM22 2l3-3 7 6-3 4z" fill="#e3e3e3" stroke="#b5b5b5" stroke-width="1.500"/></svg><span>Sensitivity</span><svg class="chev"><use href="#chev"/></svg></button>
                </div>
                <div class="label"><span>Sensitivity</span></div>
            </div>

            <div class="group addins">
                <div class="body">
                    <button class="big" type="button"><svg class="i30" viewBox="0 0 30 30"><g fill="none" stroke="#d83b01" stroke-width="1.200"><path d="M1.500 1.500h27v27h-27zM5 5h8v8H5zM17 5h8v8h-8zM5 17h8v8H5zM17 17h8v8h-8z"/></g></svg><span>Add-ins</span></button>
                </div>
                <div class="label"><span>Add-ins</span></div>
            </div>

            <div class="group ai">
                <div class="body">
                    <button class="big" type="button"><svg class="i30" viewBox="0 0 30 30"><path d="M12 5.500h17.500v21h-27V17" fill="#f5f5f5" stroke="#333"/><path d="M12 9.500h14v14H6V19M20.500 13v10M10 13.500h16" fill="none" stroke="#555"/><path d="M6 0h7l-3 7h5L3 21l3-10H1z" fill="#fbc45c" stroke="#dd7a1a" stroke-width="1.200"/></svg><span>Designer</span></button>
                    <button class="big" type="button"><svg class="i30" viewBox="0 0 30 30"><path d="M8 3c1-1.500 2-2 4-2h7c2 0 3 1 4 3l1 4h-5c-3 0-4 2-5 5l-2 7c-1 3-2 4-5 4H4c-3 0-4-3-3-6z" fill="#1e9be8"/><path d="M12 1h7c2 0 3 1 4 3l1 4h-5l-2-4c-1-2-2-3-5-3z" fill="#1d4fd0"/><path d="M2 14l-1 4c-1 3 0 6 3 6h3c3 0 4-1 5-4l2-7z" fill="#7cc04a"/><path d="M22 27c-1 1.500-2 2-4 2h-7c-2 0-3-1-4-3l-1-3h2c3 0 4-2 5-5l2-6c1-3 2-5 5-5h6c3 0 4 3 3 6z" fill="#f4695f"/><path d="M15 12c1-3 2-5 5-5h6c3 0 4 3 3 6l-2 5H13z" fill="#b35be6"/><path d="M12 20l2-8h4l-2 8z" fill="#fff"/></svg><span>Copilot</span></button>
                </div>
                <div class="label"></div>
            </div>
            <button class="collapse" type="button" aria-label="Collapse ribbon"><svg class="bigchev"><use href="#bigchev"/></svg></button>
        </section>

        <main class="work">
            <aside class="panel">
                <ol class="thumbs">
                    <li><svg viewBox="0 0 226 127"><rect width="226" height="127" fill="url(#g-bg1)"/><use href="#sec-solve"/><path d="M224 0h2v127h-2z" fill="#2d2d2d"/><path d="M224 24h2v12h-2z" fill="#8a8a8a"/></svg></li>
                    <li><svg viewBox="0 0 226 127"><rect width="226" height="127" fill="url(#g-bg1)"/><use href="#sec-solve" y="-86"/><use href="#sec-features"/><path d="M224 0h2v127h-2z" fill="#2d2d2d"/><path d="M224 33h2v12h-2z" fill="#8a8a8a"/></svg></li>
                    <li><svg viewBox="0 0 226 127"><rect width="226" height="127" fill="url(#g-bg2)"/><use href="#sec-features" y="-100"/><use href="#sec-reps" y="71"/><path d="M224 0h2v127h-2z" fill="#2d2d2d"/><path d="M224 42h2v12h-2z" fill="#8a8a8a"/></svg></li>
                    <li><svg viewBox="0 0 226 127"><rect width="226" height="127" fill="url(#g-bg2)"/><use href="#sec-reps"/><path d="M224 0h2v127h-2z" fill="#2d2d2d"/><path d="M224 49h2v12h-2z" fill="#8a8a8a"/></svg></li>
                    <li><svg viewBox="0 0 226 127"><rect width="226" height="127" fill="url(#g-bg2)"/><use href="#sec-reps" y="-57"/><use href="#sec-gains" y="86"/><path d="M224 0h2v127h-2z" fill="#2d2d2d"/><path d="M224 55h2v12h-2z" fill="#8a8a8a"/></svg></li>
                    <li class="current"><svg viewBox="0 0 226 127"><rect width="226" height="127" fill="url(#g-bg2)"/><use href="#sec-gains"/><path d="M224 0h2v127h-2z" fill="#2d2d2d"/><path d="M224 62h2v12h-2z" fill="#8a8a8a"/></svg></li>
                </ol>
                <div class="scroll left"><i class="up"></i><b></b><i class="down"></i></div>
            </aside>

            <div class="editor">
                <div class="stage">
                    <div class="canvas">
                        <article class="slide">
                            <div class="page">
                                <h1>What Your Team Gains</h1>
                                <div class="cards">
                                    <div class="card">
                                        <svg class="emoji"><use href="#e-chart"/></svg>
                                        <h2>Scale SE Impact</h2>
                                        <p>One SE records once and powers<br>every rep on the team. Your most<br>expensive technical resource stops<br>being a bottleneck and becomes a<br>multiplier across every territory.</p>
                                    </div>
                                    <div class="card">
                                        <svg class="emoji"><use href="#e-star"/></svg>
                                        <h2 class="violet">First Demo Excellence</h2>
                                        <p>Every rep delivers the same polished,<br>on-message first demo. Consistency<br>becomes your competitive advantage<br>- not just a goal that never quite gets<br>reached.</p>
                                    </div>
                                    <div class="card">
                                        <svg class="emoji"><use href="#e-bolt"/></svg>
                                        <h2>Faster Deal Velocity</h2>
                                        <p>Prospects get their first demo on the<br>AE's timeline, not the SE queue. Faster<br>first impressions mean faster pipeline<br>progression and more deals touched<br>per quarter.</p>
                                    </div>
                                    <div class="card">
                                        <svg class="emoji"><use href="#e-shuffle"/></svg>
                                        <h2 class="violet">Demo Variants by Vertical</h2>
                                        <p>Record different demo flows for<br>different verticals, personas, and<br>company sizes. Build a library that<br>covers every conversation your team<br>needs to have.</p>
                                    </div>
                                    <div class="card">
                                        <svg class="emoji"><use href="#e-sync"/></svg>
                                        <h2>Always Current</h2>
                                        <p>Product changed? The SE re-records<br>the affected flow and everyone<br>benefits instantly. No more reps<br>running outdated demos of features<br>that have moved or been renamed.</p>
                                    </div>
                                    <div class="card">
                                        <svg class="emoji"><use href="#e-target"/></svg>
                                        <h2 class="violet">Custom Branding</h2>
                                        <p>Your logo and brand colors appear on<br>every slide of every exported deck.<br>Every prospect sees a polished,<br>branded experience that builds<br>confidence before the conversation</p>
                                    </div>
                                </div>
                            </div>
                            <div class="innerbar"><i class="up"></i><b></b><i class="down"></i></div>
                        </article>
                    </div>
                    <div class="rightbar">
                        <div class="scroll right"><i class="up"></i><b></b><i class="down"></i></div>
                        <button type="button" aria-label="Previous slide"><svg viewBox="0 0 10 12"><path d="M5 0l4.500 6h-9zM5 5l4.500 6h-9z" fill="#666"/></svg></button>
                        <button type="button" aria-label="Next slide"><svg viewBox="0 0 10 12"><path d="M5 12L.5 6h9zM5 7L.5 1h9z" fill="#666"/></svg></button>
                    </div>
                </div>
                <textarea class="notes" placeholder="Click to add notes" aria-label="Notes"></textarea>
            </div>
        </main>

        <footer class="status">
            <span class="count">Slide 6 of 6</span>
            <button type="button" class="lang">English (United States)</button>
            <button type="button" class="a11y"><svg class="i16" viewBox="0 0 16 16"><path d="M6 3a1.500 1.500 0 1 1 3 0M1 3l5 2h3l5-2v2l-4 2v2M1 3v2l4 2v3l-2 4 1.500 1L7 11M8.500 12.500l2 2.500 5-5" fill="none" stroke="#333" stroke-width="1.100"/></svg>Accessibility: Good to go</button>
            <span class="fill"></span>
            <button type="button"><svg class="i16" viewBox="0 0 16 16"><path d="M0 7.500h16M0 11.500h16M0 15.500h16M5 4.500l3-3 3 3" fill="none" stroke="#222" stroke-width="1.200"/></svg>Notes</button>
            <button type="button" class="display"><svg class="i16" viewBox="0 0 16 16"><path d="M6 10.500H1.500v-9h13V6M3 14.500h4" fill="none" stroke="#222"/><circle cx="11" cy="11" r="3" fill="none" stroke="#333" stroke-width="2" stroke-dasharray="1.600 .8"/><circle cx="11" cy="11" r="1.500" fill="none" stroke="#333"/></svg>Display Settings</button>
            <div class="views">
                <button type="button" class="on" aria-label="Normal"><svg class="i14" viewBox="0 0 14 14"><path d="M.5 1.500h13v11H.500zM3.500 1.500v9h10M6.500 4.500h4v3h-4z" fill="none" stroke="#222"/></svg></button>
                <button type="button" aria-label="Slide sorter"><svg class="i14" viewBox="0 0 14 14"><path d="M.5 1.500h5v4h-5zM8.500 1.500h5v4h-5zM.5 8.500h5v4h-5zM8.500 8.500h5v4h-5z" fill="none" stroke="#222"/></svg></button>
                <button type="button" aria-label="Reading view"><svg class="i14" viewBox="0 0 14 14"><path d="M.5 1.500h5L7 3l1.500-1.500h5v10h-5L7 13l-1.500-1.500h-5zM7 3v10M2 4.500h3M2 6.500h3M2 8.500h3M9 4.500h3M9 6.500h3M9 8.500h3" fill="none" stroke="#222"/></svg></button>
                <button type="button" aria-label="Slide show"><svg class="i14" viewBox="0 0 14 14"><path d="M0 1.500h14M1.500 1.500v6h11v-6M7 7.500v5M4 13h6M4 4.500h6" fill="none" stroke="#222"/></svg></button>
            </div>
            <div class="zoom">
                <button type="button" aria-label="Zoom out"><svg class="i8" viewBox="0 0 8 8"><path d="M0 4.500h8" stroke="#222"/></svg></button>
                <input type="range" min="10" max="240" value="139" aria-label="Zoom">
                <button type="button" aria-label="Zoom in"><svg class="i8" viewBox="0 0 8 8"><path d="M0 4.500h8M4.500 0v8" stroke="#222"/></svg></button>
                <span class="pct">138%</span>
                <button type="button" aria-label="Fit to window"><svg class="i14" viewBox="0 0 14 14"><path d="M4.500 4.500h5v5h-5zM5 2.500l2-2 2 2M5 11.500l2 2 2-2M2.500 5l-2 2 2 2M11.500 5l2 2-2 2" fill="none" stroke="#222" stroke-width="1.100"/></svg></button>
            </div>
        </footer>

    </div>

</body>

</html>
```
FILE: styles.css
```css
* {
    box-sizing: border-box;
    margin: 0;
    padding: 0;
}

body {
    font-family: 'Noto Sans', 'Open Sans', sans-serif;
    font-size: 11px;
    line-height: 16px;
    color: #222;
    background-color: #e6eef0;
}

button {
    font: inherit;
    color: inherit;
    background: none;
    border: none;
    display: flex;
    align-items: center;
}

a {
    color: inherit;
    text-decoration: none;
}

svg {
    flex: none;
    display: block;
}

.defs {
    position: absolute;
}

.i8 { width: 8px; height: 8px; }
.i12 { width: 12px; height: 12px; }
.i14 { width: 14px; height: 14px; }
.i16 { width: 16px; height: 16px; }
.i18 { width: 16px; height: 18px; }
.i24 { width: 20px; height: 18px; }
.i30 { width: 30px; height: 30px; overflow: visible; }
.chev { width: 8px; height: 8px; }
.bigchev { width: 12px; height: 12px; }
.launch { width: 10px; height: 10px; }

.app {
    height: 100vh;
    display: flex;
    flex-direction: column;
    overflow: hidden;
}

/* title bar */

.titlebar {
    height: 44px;
    padding-left: 14px;
    display: grid;
    grid-template-columns: 1fr 367px 1fr;
    align-items: center;
}

.quick {
    display: flex;
    align-items: center;
}

.autosave {
    margin: 0 7px 0 15px;
}

.toggle {
    width: 49px;
    height: 20px;
    padding: 0 4px 0 8px;
    border-radius: 10px;
    background: #c43e1c;
    color: #fff;
    justify-content: space-between;
}

.toggle i {
    width: 14px;
    height: 14px;
    border-radius: 50%;
    background: #fff;
}

.tool {
    gap: 6px;
    margin-left: 12px;
}

.tool.dim,
.launch.dim {
    color: #a3a3a3;
}

.tool.show {
    margin-left: 13px;
}

.tool.more {
    margin-left: 16px;
}

.docname {
    margin-left: 25px;
    gap: 9px;
    white-space: nowrap;
}

.search {
    height: 32px;
    border: 1px solid #d2d5d6;
    border-radius: 4px;
    background: #fafafa;
    box-shadow: 0 1px 2px rgba(0, 0, 0, .15);
    display: flex;
    align-items: center;
    padding: 0 13px;
    gap: 12px;
}

.search input {
    flex: 1;
    border: none;
    background: none;
    font: inherit;
    font-size: 12px;
    outline: none;
}

.search input::placeholder {
    color: #666;
}

.winctl {
    display: flex;
    justify-content: flex-end;
}

.winctl button {
    width: 48px;
    justify-content: center;
    height: 32px;
}

.winctl button:last-child {
    width: 45px;
}

/* tabs */

.tabrow {
    height: 32px;
    display: flex;
    justify-content: space-between;
    padding: 0 10px 0 8px;
    font-size: 12px;
}

.tabs {
    display: flex;
}

.tabs a {
    margin: 6px 11px 0;
    line-height: 22px;
    height: 24px;
    border-bottom: 2px solid transparent;
    white-space: nowrap;
}

.tabs .file {
    margin-right: 14px;
}

.tabs .active {
    font-weight: 600;
    border-color: #b7340f;
}

.tabs .hover {
    border-color: #c9cccd;
}

.actions {
    display: flex;
    gap: 8px;
    padding-top: 5px;
}

.actions button {
    height: 24px;
    border: 1px solid #8a8a8a;
    border-radius: 4px;
    background: #fff;
    padding: 0 5px;
    gap: 4px;
    white-space: nowrap;
}

.actions .share {
    background: #c43e1c;
    border-color: #c43e1c;
    color: #fff;
}

/* ribbon */

.ribbon {
    height: 100px;
    margin: 0 6px 0 5px;
    background: #fff;
    border-radius: 8px;
    box-shadow: 0 1px 3px rgba(0, 0, 0, .25);
    display: flex;
    padding: 4px 0 5px;
    position: relative;
    z-index: 1;
}

.group {
    display: flex;
    flex-direction: column;
    border-right: 1px solid #d0d0d0;
    position: relative;
}

.body {
    height: 79px;
    flex: none;
    display: flex;
}

.label {
    height: 14px;
    flex: none;
    line-height: 14px;
    text-align: center;
    white-space: nowrap;
}

.label .launch {
    position: absolute;
    right: 3px;
    bottom: 0;
}

.off .launch {
    color: #a8a8a8;
}

.off,
button:disabled {
    color: #b1b1b1;
}

.off .label span {
    color: #222;
}

.off .row {
    color: #9a9a9a;
}

.off .row button {
    color: inherit;
}

.big {
    flex-direction: column;
    padding-top: 4px;
    line-height: 16px;
    white-space: nowrap;
}

.big span {
    margin-top: 4px;
}

.big > .chev {
    margin-top: 4px;
}

.big span .chev {
    display: inline-block;
    vertical-align: middle;
}

.stack button {
    height: 26px;
    gap: 4px;
    white-space: nowrap;
}

.row {
    display: flex;
    align-items: center;
    height: 24px;
}

.rows {
    display: flex;
    flex-direction: column;
    gap: 7px;
    padding: 8px 0 0 7px;
}

.row button {
    width: 26px;
    height: 24px;
    justify-content: center;
    font-size: 13px;
}

.row .split {
    width: 40px;
    gap: 8px;
}

.row .case,
.row .cols {
    gap: 4px;
}

.row .cols {
    width: 36px;
}

.row .shadow {
    text-shadow: 1px 1px 1px #ccc;
}

.sep {
    width: 1px;
    height: 24px;
    background: #d0d0d0;
    margin: 0 1px;
}

.combo {
    position: relative;
    margin-right: 2px;
}

.combo select {
    appearance: none;
    width: 100%;
    height: 24px;
    border: 1px solid #dadada;
    border-radius: 4px;
    background: #f0f0f0;
    display: block;
}

.combo .chev {
    position: absolute;
    right: 2px;
    top: 8px;
}

.combo.wide { width: 168px; }
.combo.narrow { width: 46px; }

.clipboard { width: 113px; }
.clipboard .body { padding-left: 19px; gap: 11px; }
.clipboard .stack button { gap: 12px; }
.clipboard .label { padding-right: 14px; }
.slides { width: 143px; }
.slides .body { padding-left: 10px; gap: 10px; }
.font { width: 313px; }
.font .label { padding-right: 16px; }
.paragraph { width: 347px; }
.paragraph .body { gap: 9px; }
.paragraph .label { padding-right: 16px; }
.drawing { width: 404px; }
.drawing .label { padding-right: 18px; }
.editing { width: 139px; }
.editing .body { padding-left: 12px; }
.acrobat { width: 84px; }
.voice { width: 58px; }
.sens { width: 74px; }
.addins { width: 63px; }
.ai { width: 113px; }
.acrobat .body,
.voice .body,
.sens .body,
.addins .body,
.ai .body {
    justify-content: center;
}
.ai .body { gap: 7px; }

.gallery {
    display: flex;
    height: 74px;
    margin: 2px 8px 0 9px;
    border: 1px solid #c2c2c2;
    border-radius: 4px;
}

.gallery .shapes {
    width: 146px;
    height: 72px;
}

.gallery button {
    width: 24px;
    margin: -1px;
    border: 1px solid #666;
    border-radius: 0 4px 4px 0;
    justify-content: center;
}

.quickst {
    margin: 0 10px 0 7px;
}

.collapse {
    margin: auto 9px 2px auto;
}

/* slide list */

.work {
    flex: 1;
    min-height: 0;
    display: flex;
    background:
        radial-gradient(circle at 96% 25%, #efebe8 0, rgba(239, 235, 232, 0) 24%),
        radial-gradient(circle at 98% 68%, #eaebe5 0, rgba(234, 235, 229, 0) 20%),
        radial-gradient(circle at 82% 98%, #d9ebe9 0, rgba(217, 235, 233, 0) 24%),
        linear-gradient(#e6eff1, #e1eaee);
}

.panel {
    width: 300px;
    display: flex;
    border-right: 1px solid #ccd4d6;
    overflow: hidden;
}

.thumbs {
    flex: 1;
    counter-reset: slide;
    list-style: none;
    padding-top: 20px;
}

.thumbs li {
    counter-increment: slide;
    display: flex;
    height: 149px;
    padding-left: 9px;
    font-size: 15px;
    line-height: 6px;
    color: #444;
}

.thumbs li::before {
    content: counter(slide);
    width: 24px;
}

.thumbs svg {
    width: 226px;
    height: 127px;
    border-radius: 4px;
    box-shadow: 0 0 0 1px #c3c0c0, 0 1px 3px rgba(0, 0, 0, .4);
}

.thumbs .current {
    color: #d04525;
}

.thumbs .current svg {
    box-shadow: 0 0 0 1px #fff, 0 0 0 4px #7a0b12;
}

.tiny {
    font-size: 2px;
}

.t-head {
    font-size: 6px;
    font-weight: 700;
    text-anchor: middle;
}

.t-sub {
    font-size: 5px;
    font-weight: 700;
}

.t-mid {
    text-anchor: middle;
}

.t-card {
    font-size: 3px;
    font-weight: 700;
}

.scroll {
    display: flex;
    flex-direction: column;
    align-items: center;
    background: #f5f5f5;
    border-radius: 8px;
}

.scroll b {
    width: 9px;
    border-radius: 5px;
    background: #707070;
}

.up,
.down {
    border: 5px solid transparent;
}

.up {
    border-bottom: 7px solid #666;
    border-top: none;
}

.down {
    border-top: 7px solid #666;
    border-bottom: none;
}

.scroll.left {
    width: 17px;
    margin-right: 3px;
    padding: 5px 0 4px;
}

.scroll.left b {
    flex: 1;
    margin: 5px 0 87px;
}

/* editor */

.editor {
    flex: 1;
    min-width: 0;
    display: flex;
    flex-direction: column;
}

.stage {
    flex: 1;
    min-height: 0;
    display: flex;
}

.canvas {
    flex: 1;
    padding: 20px 139px 22px 141px;
}

.slide {
    height: 100%;
    display: flex;
    overflow: hidden;
    box-shadow: 0 0 0 1px #b9bcc4;
    background: linear-gradient(160deg, #1b1943 0, #1c1445 20%, #1d1246 48%, #1b1545 72%, #191b41 100%);
    color: #94a0b8;
    font-family: 'Open Sans', 'Noto Sans', sans-serif;
}

.page {
    flex: 1;
    padding-top: 69px;
    text-align: center;
}

.page h1,
.page h2 {
    width: fit-content;
    margin: 0 auto;
    color: transparent;
    background: linear-gradient(100deg, #22d3ee, #818cf8);
    background-clip: text;
    -webkit-background-clip: text;
}

.page h1 {
    font-size: 30px;
    line-height: 44px;
    background-image: linear-gradient(100deg, #38bdf8, #7ba0f9);
}

.page h2 {
    font-size: 16px;
    line-height: 24px;
    white-space: nowrap;
}

.page .violet {
    background-image: linear-gradient(100deg, #a78bfa, #c084fc);
}

.cards {
    width: 834px;
    margin: 55px auto 0;
    display: grid;
    grid-template-columns: repeat(3, minmax(0, 1fr));
    gap: 26px 24px;
}

.card {
    padding: 44px 20px 28px;
    border: 1px solid #2a2154;
    border-radius: 9px;
    background: #1b1b40;
}

.emoji {
    width: 36px;
    height: 42px;
    margin: 0 auto 29px;
}

.card p {
    margin-top: 11px;
    font-size: 12px;
    line-height: 22px;
}

.innerbar {
    width: 12px;
    background: #2d2d2d;
    display: flex;
    flex-direction: column;
    align-items: center;
    padding: 4px 0;
}

.innerbar b {
    width: 6px;
    height: 72px;
    border-radius: 3px;
    background: #9a9a9a;
    margin: 357px 0 auto;
}

.innerbar .up { border-width: 0 4px 6px; border-bottom-color: #999; }
.innerbar .down { border-width: 6px 4px 0; border-top-color: #999; }

.rightbar {
    width: 15px;
    margin-bottom: 22px;
    display: flex;
    flex-direction: column;
    align-items: center;
}

.rightbar button svg {
    width: 10px;
    height: 12px;
    margin-top: 4px;
}

.scroll.right {
    flex: 1;
    width: 15px;
    padding: 5px 0;
}

.scroll.right b {
    height: 116px;
    margin: auto 0 5px;
}

.notes {
    height: 47px;
    margin-left: 2px;
    padding: 5px 9px;
    border: none;
    border-top: 1px solid #c9d1d3;
    background: none;
    resize: none;
    font: 14px/22px 'Open Sans', 'Noto Sans', sans-serif;
    outline: none;
}

.notes::placeholder {
    color: #555;
}

/* status bar */

.status {
    height: 20px;
    border-top: 1px solid #fff;
    background: #f3f3f3;
    display: flex;
    align-items: center;
    padding: 0 4px 0 9px;
    white-space: nowrap;
}

.status button {
    gap: 3px;
}

.lang {
    margin-left: 32px;
}

.a11y {
    margin-left: 16px;
}

.fill {
    flex: 1;
}

.display {
    margin-left: 16px;
}

.views {
    display: flex;
    margin-left: 18px;
}

.views button {
    width: 40px;
    height: 20px;
    justify-content: center;
}

.views .on {
    background: #dcdcdc;
}

.zoom {
    display: flex;
    align-items: center;
    margin-left: 7px;
    gap: 4px;
}

.zoom input {
    appearance: none;
    width: 100px;
    height: 12px;
    background: linear-gradient(#777, #777) center / 100% 1px no-repeat, linear-gradient(#777, #777) center / 1px 6px no-repeat;
}

.zoom input::-webkit-slider-thumb {
    appearance: none;
    width: 5px;
    height: 11px;
    background: #666;
}

.pct {
    margin: 0 8px 0 9px;
}
```
